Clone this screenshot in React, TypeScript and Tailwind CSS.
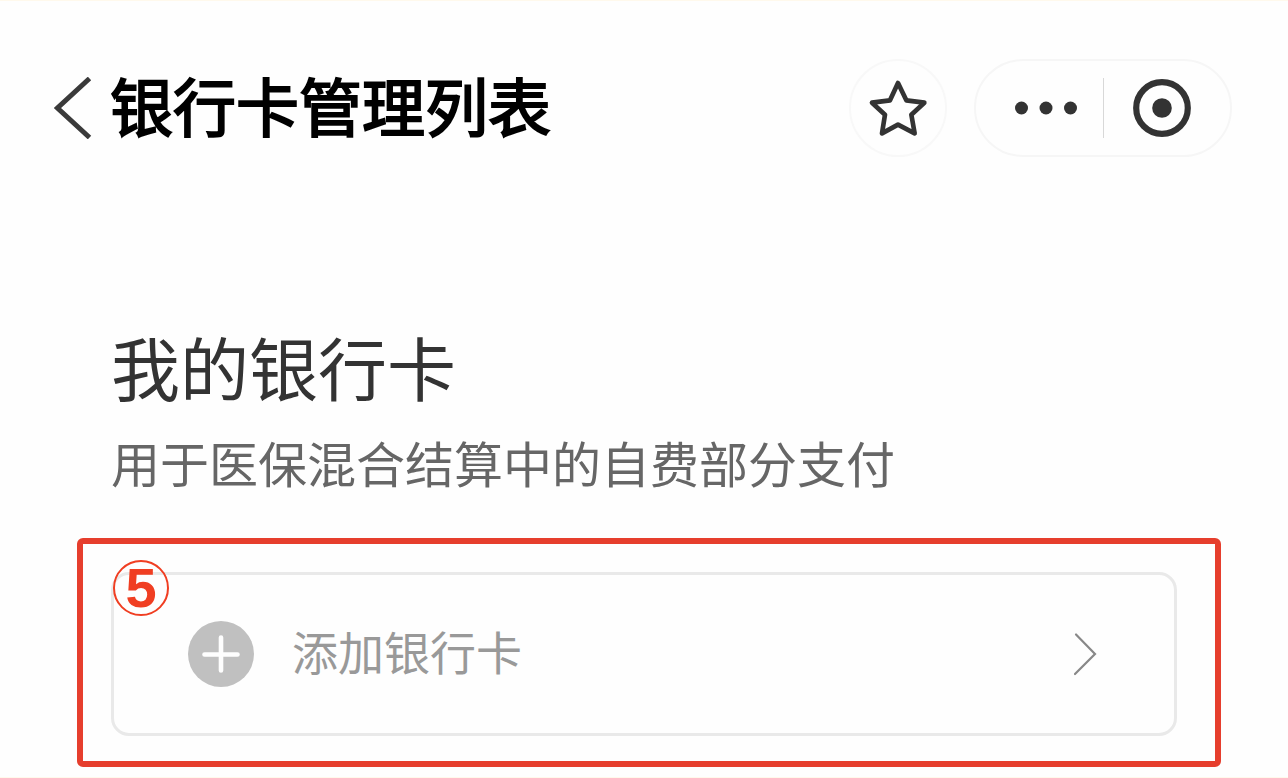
function BackIcon() {
  return (
    <svg viewBox="0 0 38 62" className="h-[62px] w-[38px]" fill="none" stroke="#3a3a3a" strokeWidth="5" aria-hidden="true">
      <path d="M35.5 1.5 3.500 31 35.5 60.500" />
    </svg>
  );
}

function StarIcon() {
  return (
    <svg viewBox="85 82 180 180" className="size-[60px]" fill="none" stroke="#333333" strokeWidth="14" strokeLinejoin="round" aria-hidden="true">
      <path d="M175 97 200 149 254 156 215 192 225 248 175 222 127 248 136 192 97 156 151 149Z" />
    </svg>
  );
}

function MoreIcon() {
  return (
    <svg viewBox="0 0 64 16" className="h-4 w-16" fill="#333333" aria-hidden="true">
      <circle cx="7.500" cy="8" r="6.500" />
      <circle cx="32" cy="8" r="6.500" />
      <circle cx="56.500" cy="8" r="6.500" />
    </svg>
  );
}

function CloseIcon() {
  return (
    <svg viewBox="0 0 60 60" className="size-[60px]" aria-hidden="true">
      <circle cx="30" cy="30" r="25.800" fill="none" stroke="#333333" strokeWidth="6.200" />
      <circle cx="30" cy="30" r="9.800" fill="#333333" />
    </svg>
  );
}

function PlusIcon() {
  return (
    <svg viewBox="0 0 66 66" className="size-[66px] shrink-0" aria-hidden="true">
      <circle cx="33" cy="33" r="33" fill="#c0c0c0" />
      <path d="M33 16.500V49.500M16.500 33.500H49.500" stroke="#fefefe" strokeWidth="4.600" strokeLinecap="round" />
    </svg>
  );
}

function ChevronIcon() {
  return (
    <svg viewBox="0 0 24 44" className="h-11 w-6 shrink-0" fill="none" stroke="#888888" strokeWidth="2.200" strokeLinecap="round" aria-hidden="true">
      <path d="M3 2.500 22 22 2 42" />
    </svg>
  );
}

export default function App() {
  return (
    <div className="min-h-screen border-y border-[#fff9ec] bg-[#fefefe] pb-2.5 font-['Noto_Sans_CJK_SC','Noto_Sans',sans-serif]">
      <header className="flex items-center pt-[58px] pr-14 pl-[54px]">
        <button type="button" aria-label="返回" className="shrink-0">
          <BackIcon />
        </button>
        <h1 className="ml-[18px] grow self-start text-[63px] leading-[90px] font-normal whitespace-nowrap text-black [-webkit-text-stroke:2px_black]">银行卡管理列表</h1>
        <button type="button" aria-label="收藏" className="flex size-[98px] shrink-0 items-center justify-center rounded-full border-2 border-[#f8f8f8]">
          <StarIcon />
        </button>
        <div className="ml-[27px] flex h-[98px] w-[258px] shrink-0 items-center rounded-full border-2 border-[#f6f6f6]">
          <button type="button" aria-label="更多" className="flex h-[60px] w-32 items-center justify-end border-r border-[#d8d8d8] pr-[25px]">
            <MoreIcon />
          </button>
          <button type="button" aria-label="关闭" className="ml-7">
            <CloseIcon />
          </button>
        </div>
      </header>

      <main>
        <section className="px-[111px] pt-[159px]">
          <h2 className="text-[69px] leading-[100px] text-[#333333]">我的银行卡</h2>
          <p className="text-[49px] leading-[92px] text-[#666666]">用于医保混合结算中的自费部分支付</p>
        </section>

        <div className="mt-[30px] mr-[67px] ml-[77px] rounded-md border-[6px] border-[#e63e2d] pt-7 pr-[38px] pb-[25px] pl-7">
          <div className="relative">
            <button type="button" className="flex h-[164px] w-full items-center rounded-[18px] border-[3px] border-[#e9e9e9] pr-[77px] pb-px pl-[74px] text-left">
              <PlusIcon />
              <span className="ml-[38px] grow pb-[7px] text-[46px] leading-[66px] text-[#999999]">添加银行卡</span>
              <ChevronIcon />
            </button>
            <span className="absolute -top-3 left-0.5 flex size-14 items-center justify-center rounded-full border-2 border-[#f03e22] font-['Liberation_Sans',sans-serif] text-[56px] leading-none font-bold text-[#f03e22]">
              5
            </span>
          </div>
        </div>
      </main>
    </div>
  );
}
